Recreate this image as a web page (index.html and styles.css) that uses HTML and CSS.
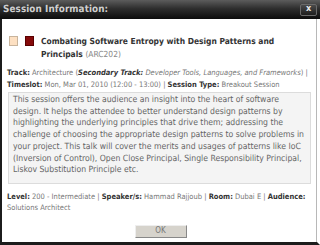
FILE: index.html
```html
<!DOCTYPE html>
<html>
<head>
<meta charset="utf-8">
<link rel="stylesheet" href="styles.css">
</head>
<body>
<div class="dialog">
  <div class="titlebar">
    <span class="title">Session Information:</span>
    <span class="close">x</span>
  </div>
  <div class="body">
    <div class="head">
      <div class="swatches">
        <span class="sw sw-light"></span>
        <span class="sw sw-dark"></span>
      </div>
      <h1 class="name">Combating Software Entropy with Design Patterns and Principals <span class="code">(ARC202)</span></h1>
    </div>
    <p class="meta"><b>Track:</b> Architecture (<b><i>Secondary Track:</i></b> <i>Developer Tools, Languages, and Frameworks</i>) | <b>Timeslot:</b> Mon, Mar 01, 2010 (12:00 - 13:00) | <b>Session Type:</b> Breakout Session</p>
    <div class="desc">This session offers the audience an insight into the heart of software<br>design. It helps the attendee to better understand design patterns by<br>highlighting the underlying principles that drive them; addressing the<br>challenge of choosing the appropriate design patterns to solve problems in<br>your project. This talk will cover the merits and usages of patterns like IoC<br>(Inversion of Control), Open Close Principal, Single Responsibility Principal,<br>Liskov Substitution Principle etc.</div>
    <p class="meta meta2"><b>Level:</b> 200 - Intermediate | <b>Speaker/s:</b> Hammad Rajjoub | <b>Room:</b> Dubai E | <b>Audience:</b> Solutions Architect</p>
    <div class="actions"><button class="ok">OK</button></div>
  </div>
</div>
</body>
</html>
```
FILE: styles.css
```css
html, body { margin: 0; padding: 0; background: #fff; }
body { width: 320px; height: 245px; overflow: hidden; font-family: "DejaVu Sans Condensed", "DejaVu Sans", sans-serif; text-rendering: geometricPrecision; }
.dialog { width: 320px; height: 245px; display: flex; flex-direction: column; }
.titlebar {
  height: 19px; flex: none; box-sizing: border-box;
  background: linear-gradient(#5c5c5c 0%, #2e2e2e 45%, #0c0c0c 100%);
  display: flex; align-items: center; justify-content: space-between;
  padding: 0 3px 0 3px;
}
.title { color: #cfcfcf; font-weight: bold; font-size: 9.8px; letter-spacing: 0.1px; }
.close {
  width: 17px; height: 12px; box-sizing: border-box;
  background: linear-gradient(#4a4a4a, #1e1e1e);
  border: 1px solid #6a6a6a; border-radius: 2px;
  color: #e8e8e8; font-size: 9px; font-weight: bold; line-height: 9px; text-align: center;
}
.body {
  flex: 1; box-sizing: border-box;
  border-left: 2px solid #1c1c1c; border-right: 3px solid #fff; border-bottom: 3px solid #1c1c1c;
  box-shadow: inset -1px 0 0 #b8b8b8;
  padding: 16px 6px 0 5px;
  color: #666;
}
.head { display: flex; align-items: flex-start; gap: 7px; padding-left: 2px; }
.swatches { display: flex; gap: 7px; padding-top: 1px; flex: none; }
.sw { width: 9px; height: 10px; box-sizing: border-box; display: block; }
.sw-light { background: #fde0c2; border: 1px solid #c8b49c; }
.sw-dark { background: #850a0a; border: 1px solid #5a0000; }
.name { margin: 0; font-size: 8.4px; line-height: 13px; font-weight: bold; color: #333; }
.code { font-weight: normal; color: #888; }
.meta { margin: 6px 0 0 0; font-size: 7.5px; line-height: 11.5px; color: #777; }
.meta b { color: #333; }
.desc {
  margin: 2px 0 0 1px; padding: 2px 4px 6px 4px;
  background: #f4f4f4; border: 1px solid #dcdcdc;
  font-size: 8.6px; line-height: 11.7px; color: #666;
  white-space: nowrap; overflow: hidden;
}
.meta2 { margin-top: 7px; }
.actions { display: flex; justify-content: center; margin-top: 11px; padding-left: 3px; }
.ok {
  width: 52px; height: 13px; padding: 0; box-sizing: border-box;
  background: #d6d3cc; border: 1px solid; border-color: #eee #888 #888 #eee;
  font-family: inherit; font-size: 8px; color: #777; line-height: 10px;
}
```
